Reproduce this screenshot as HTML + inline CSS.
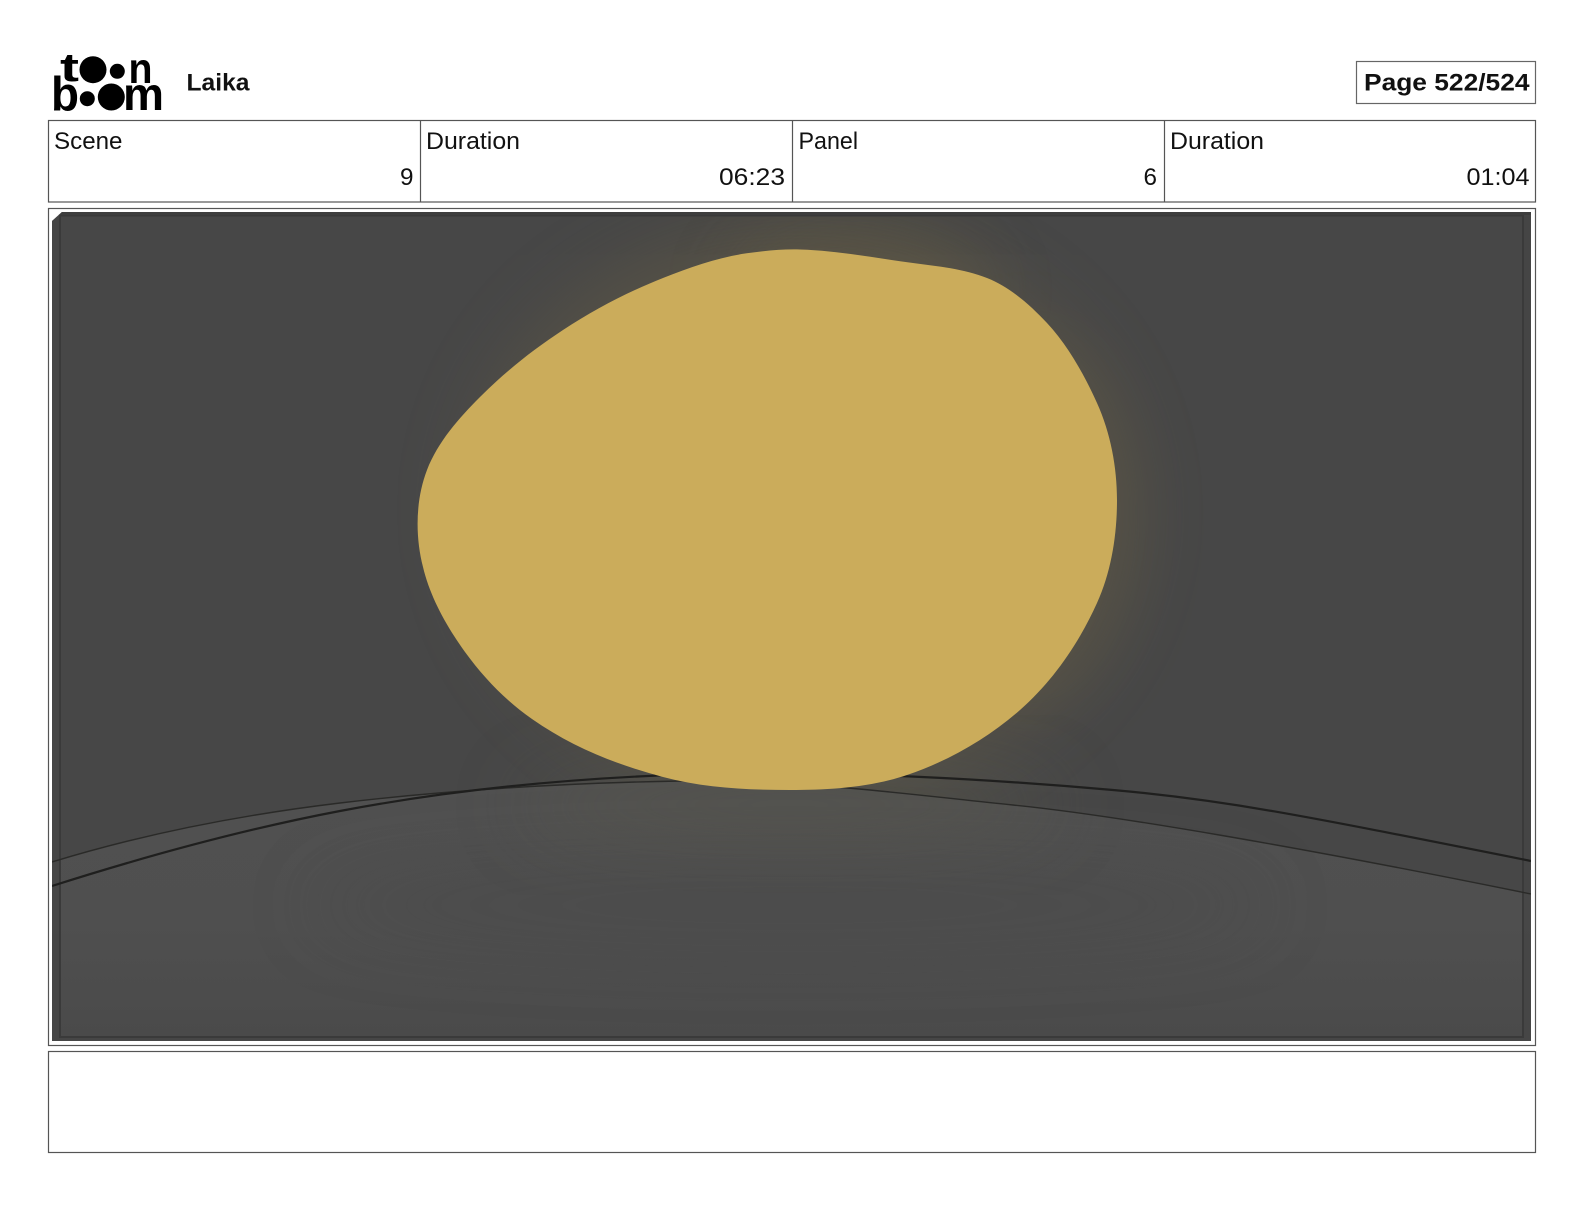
<!DOCTYPE html>
<html>
<head>
<meta charset="utf-8">
<title>Laika</title>
<style>
html,body{margin:0;padding:0;background:#fff;width:1584px;height:1224px;overflow:hidden}
svg{display:block}
text{font-family:"Liberation Sans",sans-serif;fill:#111}
</style>
</head>
<body>
<svg xmlns="http://www.w3.org/2000/svg" width="1584" height="1224" viewBox="0 0 1584 1224">
<defs>
<filter id="b60" x="-50%" y="-100%" width="200%" height="300%"><feGaussianBlur stdDeviation="38"/></filter>
<filter id="b40" x="-50%" y="-50%" width="200%" height="200%"><feGaussianBlur stdDeviation="36"/></filter>
<clipPath id="img"><path d="M52 221L62 212H1531V1041H52Z"/></clipPath>
<linearGradient id="gr" x1="0" y1="0" x2="0" y2="1">
<stop offset="0" stop-color="#505050"/><stop offset=".55" stop-color="#4f4f4f"/><stop offset="1" stop-color="#4a4a4a"/>
</linearGradient>
<path id="blob" d="M800 249.5C838 250.6 875 258 913 263C938 266.3 963.8 268.8 987 278C1010.3 287.3 1030 304.8 1047 323C1068 345.6 1084.3 374.8 1097 403C1110.5 433 1117 467 1117 500C1117 535 1111.4 571.2 1097 603C1079 643 1053 681 1020 710C987.8 738.4 947.9 761.2 907 775C870 787.5 829 790 790 790C747 790 704.5 788 663 777C615.7 764.4 572 747 532 719C506 701 484 678 465 652C447 627 430 597 423 567C415 536 415.5 499.8 427 470C437.8 442 458.7 418.3 480 397C505.6 371.4 532.8 349.8 563 330C595 309 627.7 292 663 278C690 267.3 718 257.4 746.7 253.3C764.5 250.8 782 249 800 249.5Z"/>
</defs>

<!-- logo -->
<g fill="#000">
<text x="60" y="81" font-size="40" font-weight="700" textLength="19" lengthAdjust="spacingAndGlyphs" style="fill:#000">t</text>
<circle cx="93" cy="69.7" r="13.5"/>
<circle cx="117.3" cy="71.3" r="7.5"/>
<text x="128.5" y="83" font-size="43" font-weight="700" textLength="24" lengthAdjust="spacingAndGlyphs" style="fill:#000">n</text>
<text x="51" y="110.5" font-size="48" font-weight="700" textLength="28" lengthAdjust="spacingAndGlyphs" style="fill:#000">b</text>
<circle cx="87.3" cy="98.7" r="7.5"/>
<circle cx="111.3" cy="97" r="13.5"/>
<text x="123" y="110" font-size="46" font-weight="700" textLength="41" lengthAdjust="spacingAndGlyphs" style="fill:#000">m</text>
</g>
<text x="186.5" y="90.5" font-size="24.5" font-weight="700" textLength="63" lengthAdjust="spacingAndGlyphs">Laika</text>

<!-- page box -->
<rect x="1356.5" y="61.5" width="179" height="42" fill="#fff" stroke="#666" stroke-width="1.2"/>
<text x="1364" y="90.5" font-size="24.5" font-weight="700" textLength="165.5" lengthAdjust="spacingAndGlyphs">Page 522/524</text>

<!-- info table -->
<g fill="none" stroke="#555" stroke-width="1.2">
<rect x="48.5" y="120.5" width="1487" height="81.5"/>
<path d="M420.5 120V202M792.5 120V202M1164.5 120V202"/>
</g>
<g font-size="24">
<text x="54" y="149" textLength="68.5" lengthAdjust="spacingAndGlyphs">Scene</text>
<text x="426" y="149" textLength="94" lengthAdjust="spacingAndGlyphs">Duration</text>
<text x="798.5" y="149" textLength="59.5" lengthAdjust="spacingAndGlyphs">Panel</text>
<text x="1170" y="149" textLength="94" lengthAdjust="spacingAndGlyphs">Duration</text>
<text x="400" y="185" textLength="13.5" lengthAdjust="spacingAndGlyphs">9</text>
<text x="719" y="185" textLength="66" lengthAdjust="spacingAndGlyphs">06:23</text>
<text x="1143.5" y="185" textLength="13.5" lengthAdjust="spacingAndGlyphs">6</text>
<text x="1466.5" y="185" textLength="63" lengthAdjust="spacingAndGlyphs">01:04</text>
</g>

<!-- image frame -->
<rect x="48.5" y="208.5" width="1487" height="837" fill="#fff" stroke="#555" stroke-width="1.2"/>

<g clip-path="url(#img)">
<rect x="52" y="212" width="1479" height="829" fill="#474747"/>
<!-- glow -->
<ellipse cx="800" cy="510" rx="330" ry="285" fill="#6e6445" opacity=".36" filter="url(#b40)"/>
<ellipse cx="860" cy="290" rx="130" ry="60" fill="#6e6445" opacity=".3" filter="url(#b40)"/>
<ellipse cx="1030" cy="520" rx="110" ry="190" fill="#6e6445" opacity=".16" filter="url(#b40)"/>
<!-- ground -->
<path d="M52 862C140 835 240 815 340 803S560 783 680 781S913 795 1013 805S1300 847 1531 894V1041H52Z" fill="url(#gr)"/>
<ellipse cx="790" cy="905" rx="480" ry="40" fill="#474747" opacity=".45" filter="url(#b60)"/>
<ellipse cx="790" cy="805" rx="270" ry="30" fill="#5b5a4e" opacity=".5" filter="url(#b60)"/>
<!-- outer band -->
<path fill-rule="evenodd" d="M52 212H1531V1041H52ZM60 216V1037H1523V216Z" fill="#454545" opacity=".8"/>
<!-- inner frame -->
<rect x="60" y="215.5" width="1463" height="821.5" fill="none" stroke="#3a3a3a" stroke-width="2"/>
<path d="M52 212H1531V215H52Z" fill="#3e3e3e"/>
<!-- lines -->
<path d="M52 862C140 835 240 815 340 803S560 783 680 781S913 795 1013 805S1300 847 1531 894" fill="none" stroke="#2a2a28" stroke-width="1.4"/>
<path d="M52 886C140 858 240 830 340 811S560 778 700 774S1000 780 1113 790S1300 815 1531 861" fill="none" stroke="#1f1f1e" stroke-width="2.2"/>
<!-- blob -->
<use href="#blob" fill="#CBAC5B"/>
</g>

<!-- notes -->
<rect x="48.5" y="1051.5" width="1487" height="101" fill="#fff" stroke="#555" stroke-width="1.2"/>
</svg>
</body>
</html>
